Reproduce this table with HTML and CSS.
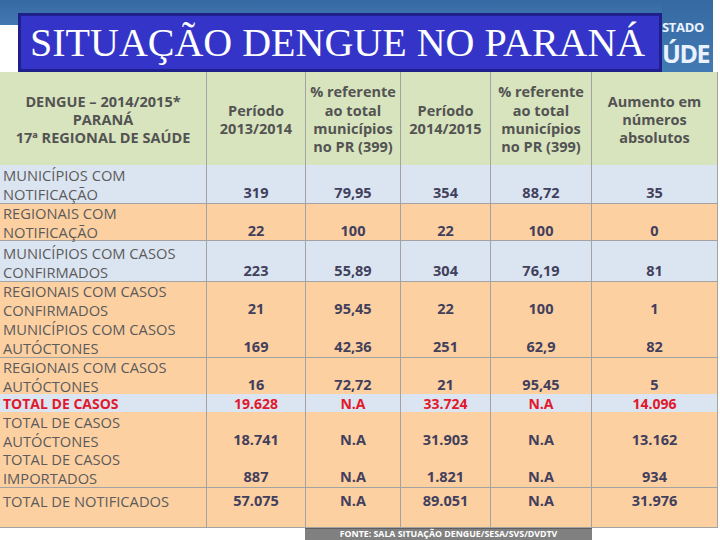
FILE: index.html
```html
<!DOCTYPE html>
<html lang="pt">
<head>
<meta charset="utf-8">
<title>Situação Dengue no Paraná</title>
<link rel="stylesheet" href="styles.css">
</head>
<body>
<div class="slide">
  <header class="head">
    <div class="head-left">
      <h1 class="title">SITUAÇÃO DENGUE NO PARANÁ</h1>
    </div>
    <div class="logo">
      <span class="logo-top">STADO</span>
      <span class="logo-big">ÚDE</span>
    </div>
  </header>

  <div class="table">
    <div class="row hdr">
      <div class="cell">DENGUE – 2014/2015*<br>PARANÁ<br>17ª REGIONAL DE SAÚDE</div>
      <div class="cell">Período<br>2013/2014</div>
      <div class="cell">% referente<br>ao total<br>municípios<br>no PR (399)</div>
      <div class="cell">Período<br>2014/2015</div>
      <div class="cell">% referente<br>ao total<br>municípios<br>no PR (399)</div>
      <div class="cell">Aumento em<br>números<br>absolutos</div>
    </div>

    <div class="row blue h38">
      <div class="cell lbl">MUNICÍPIOS COM<br>NOTIFICAÇÃO</div>
      <div class="cell val">319</div><div class="cell val">79,95</div><div class="cell val">354</div><div class="cell val">88,72</div><div class="cell val">35</div>
    </div>
    <div class="row orange h37 line">
      <div class="cell lbl">REGIONAIS COM<br>NOTIFICAÇÃO</div>
      <div class="cell val">22</div><div class="cell val">100</div><div class="cell val">22</div><div class="cell val">100</div><div class="cell val">0</div>
    </div>
    <div class="row blue h41 line">
      <div class="cell lbl">MUNICÍPIOS COM CASOS<br>CONFIRMADOS</div>
      <div class="cell val">223</div><div class="cell val">55,89</div><div class="cell val">304</div><div class="cell val">76,19</div><div class="cell val">81</div>
    </div>
    <div class="row orange h38 line">
      <div class="cell lbl">REGIONAIS COM CASOS<br>CONFIRMADOS</div>
      <div class="cell val">21</div><div class="cell val">95,45</div><div class="cell val">22</div><div class="cell val">100</div><div class="cell val">1</div>
    </div>
    <div class="row orange h38">
      <div class="cell lbl">MUNICÍPIOS COM CASOS<br>AUTÓCTONES</div>
      <div class="cell val">169</div><div class="cell val">42,36</div><div class="cell val">251</div><div class="cell val">62,9</div><div class="cell val">82</div>
    </div>
    <div class="row orange h37 line">
      <div class="cell lbl">REGIONAIS COM CASOS<br>AUTÓCTONES</div>
      <div class="cell val">16</div><div class="cell val">72,72</div><div class="cell val">21</div><div class="cell val">95,45</div><div class="cell val">5</div>
    </div>
    <div class="row blue h18 red">
      <div class="cell lbl">TOTAL DE CASOS</div>
      <div class="cell val">19.628</div><div class="cell val">N.A</div><div class="cell val">33.724</div><div class="cell val">N.A</div><div class="cell val">14.096</div>
    </div>
    <div class="row orange h38">
      <div class="cell lbl">TOTAL DE CASOS<br>AUTÓCTONES</div>
      <div class="cell val">18.741</div><div class="cell val">N.A</div><div class="cell val">31.903</div><div class="cell val">N.A</div><div class="cell val">13.162</div>
    </div>
    <div class="row orange h37">
      <div class="cell lbl">TOTAL DE CASOS<br>IMPORTADOS</div>
      <div class="cell val">887</div><div class="cell val">N.A</div><div class="cell val">1.821</div><div class="cell val">N.A</div><div class="cell val">934</div>
    </div>
    <div class="row orange h41 line bottom top-al">
      <div class="cell lbl">TOTAL DE NOTIFICADOS</div>
      <div class="cell val">57.075</div><div class="cell val">N.A</div><div class="cell val">89.051</div><div class="cell val">N.A</div><div class="cell val">31.976</div>
    </div>
  </div>

  <div class="source"><span class="source-box">FONTE: SALA SITUAÇÃO DENGUE/SESA/SVS/DVDTV</span></div>
</div>
</body>
</html>
```

FILE: styles.css
```css
* { box-sizing: border-box; }
html, body { margin: 0; padding: 0; background: #fff; }
.slide {
  width: 720px;
  height: 540px;
  overflow: hidden;
  background: #fff;
  font-family: "Open Sans", sans-serif;
}

/* header */
.head { display: flex; height: 72px; }
.head-left {
  width: 662px;
  padding: 13px 0 0 18px;
  background: linear-gradient(to bottom, #3669a2 0, #4279b3 25px, #ffffff 25px);
}
.title {
  margin: 0;
  height: 59px;
  border: 3px solid #20208c;
  background: #3434c9;
  color: #fff;
  font-family: "Liberation Serif", serif;
  font-weight: normal;
  font-size: 40px;
  line-height: 54px;
  padding-left: 9px;
  white-space: nowrap;
}
.logo {
  width: 51px;
  background: linear-gradient(to bottom, #3669a2, #417ab3);
  display: flex;
  flex-direction: column;
  padding-top: 19px;
  color: #eaf2ff;
  font-weight: 700;
}
.logo-top { font-size: 13px; line-height: 16px; letter-spacing: -0.3px; }
.logo-big { font-size: 25px; line-height: 30px; margin-top: 3px; letter-spacing: -1.5px; }

/* table */
.table { width: 718px; }
.row {
  display: grid;
  grid-template-columns: 207px 99px 95px 90px 101px 126px;
}
.cell { border-right: 1px solid #a3a3a3; }
.hdr { height: 93px; background: #d8e4bd; }
.hdr .cell {
  display: flex;
  align-items: center;
  justify-content: center;
  text-align: center;
  font-weight: 700;
  font-size: 14.5px;
  line-height: 18.3px;
  color: #535353;
  padding-top: 3px;
}
.blue { background: #dbe5f1; }
.orange { background: #fdd0a2; }
.h18 { height: 18px; }
.h37 { height: 37px; }
.h38 { height: 38px; }
.h41 { height: 41px; }
.line { border-top: 1px solid #a3a3a3; }
.bottom { border-bottom: 1px solid #a3a3a3; }

.lbl {
  display: flex;
  flex-direction: column;
  justify-content: flex-end;
  padding: 0 0 0 3px;
  font-size: 14.7px;
  line-height: 18.5px;
  color: #5b5b5b;
  white-space: nowrap;
}
.val {
  display: flex;
  align-items: flex-end;
  justify-content: center;
  padding-bottom: 1px;
  font-size: 14.5px;
  line-height: 18.5px;
  font-weight: 700;
  color: #423f5c;
}
.top-al .lbl { justify-content: flex-start; padding-top: 4px; }
.top-al .val { align-items: flex-start; padding-top: 4px; }
.red .lbl, .red .val {
  color: #e1192c;
  font-weight: 700;
  font-size: 14px;
  padding: 0 0 0 0;
  line-height: 20px;
  align-items: flex-start;
  justify-content: flex-start;
}
.red .val { justify-content: center; }
.red .lbl { padding-left: 3px; }
.red .cell { overflow: visible; }

/* source */
.source { padding-left: 305px; height: 12px; }
.source-box {
  display: block;
  width: 287px;
  height: 12px;
  background: #808080;
  border-top: 1px solid #5e5e5e;
  color: #fff;
  font-size: 8.8px;
  font-weight: 700;
  line-height: 11px;
  text-align: center;
  white-space: nowrap;
}
```
